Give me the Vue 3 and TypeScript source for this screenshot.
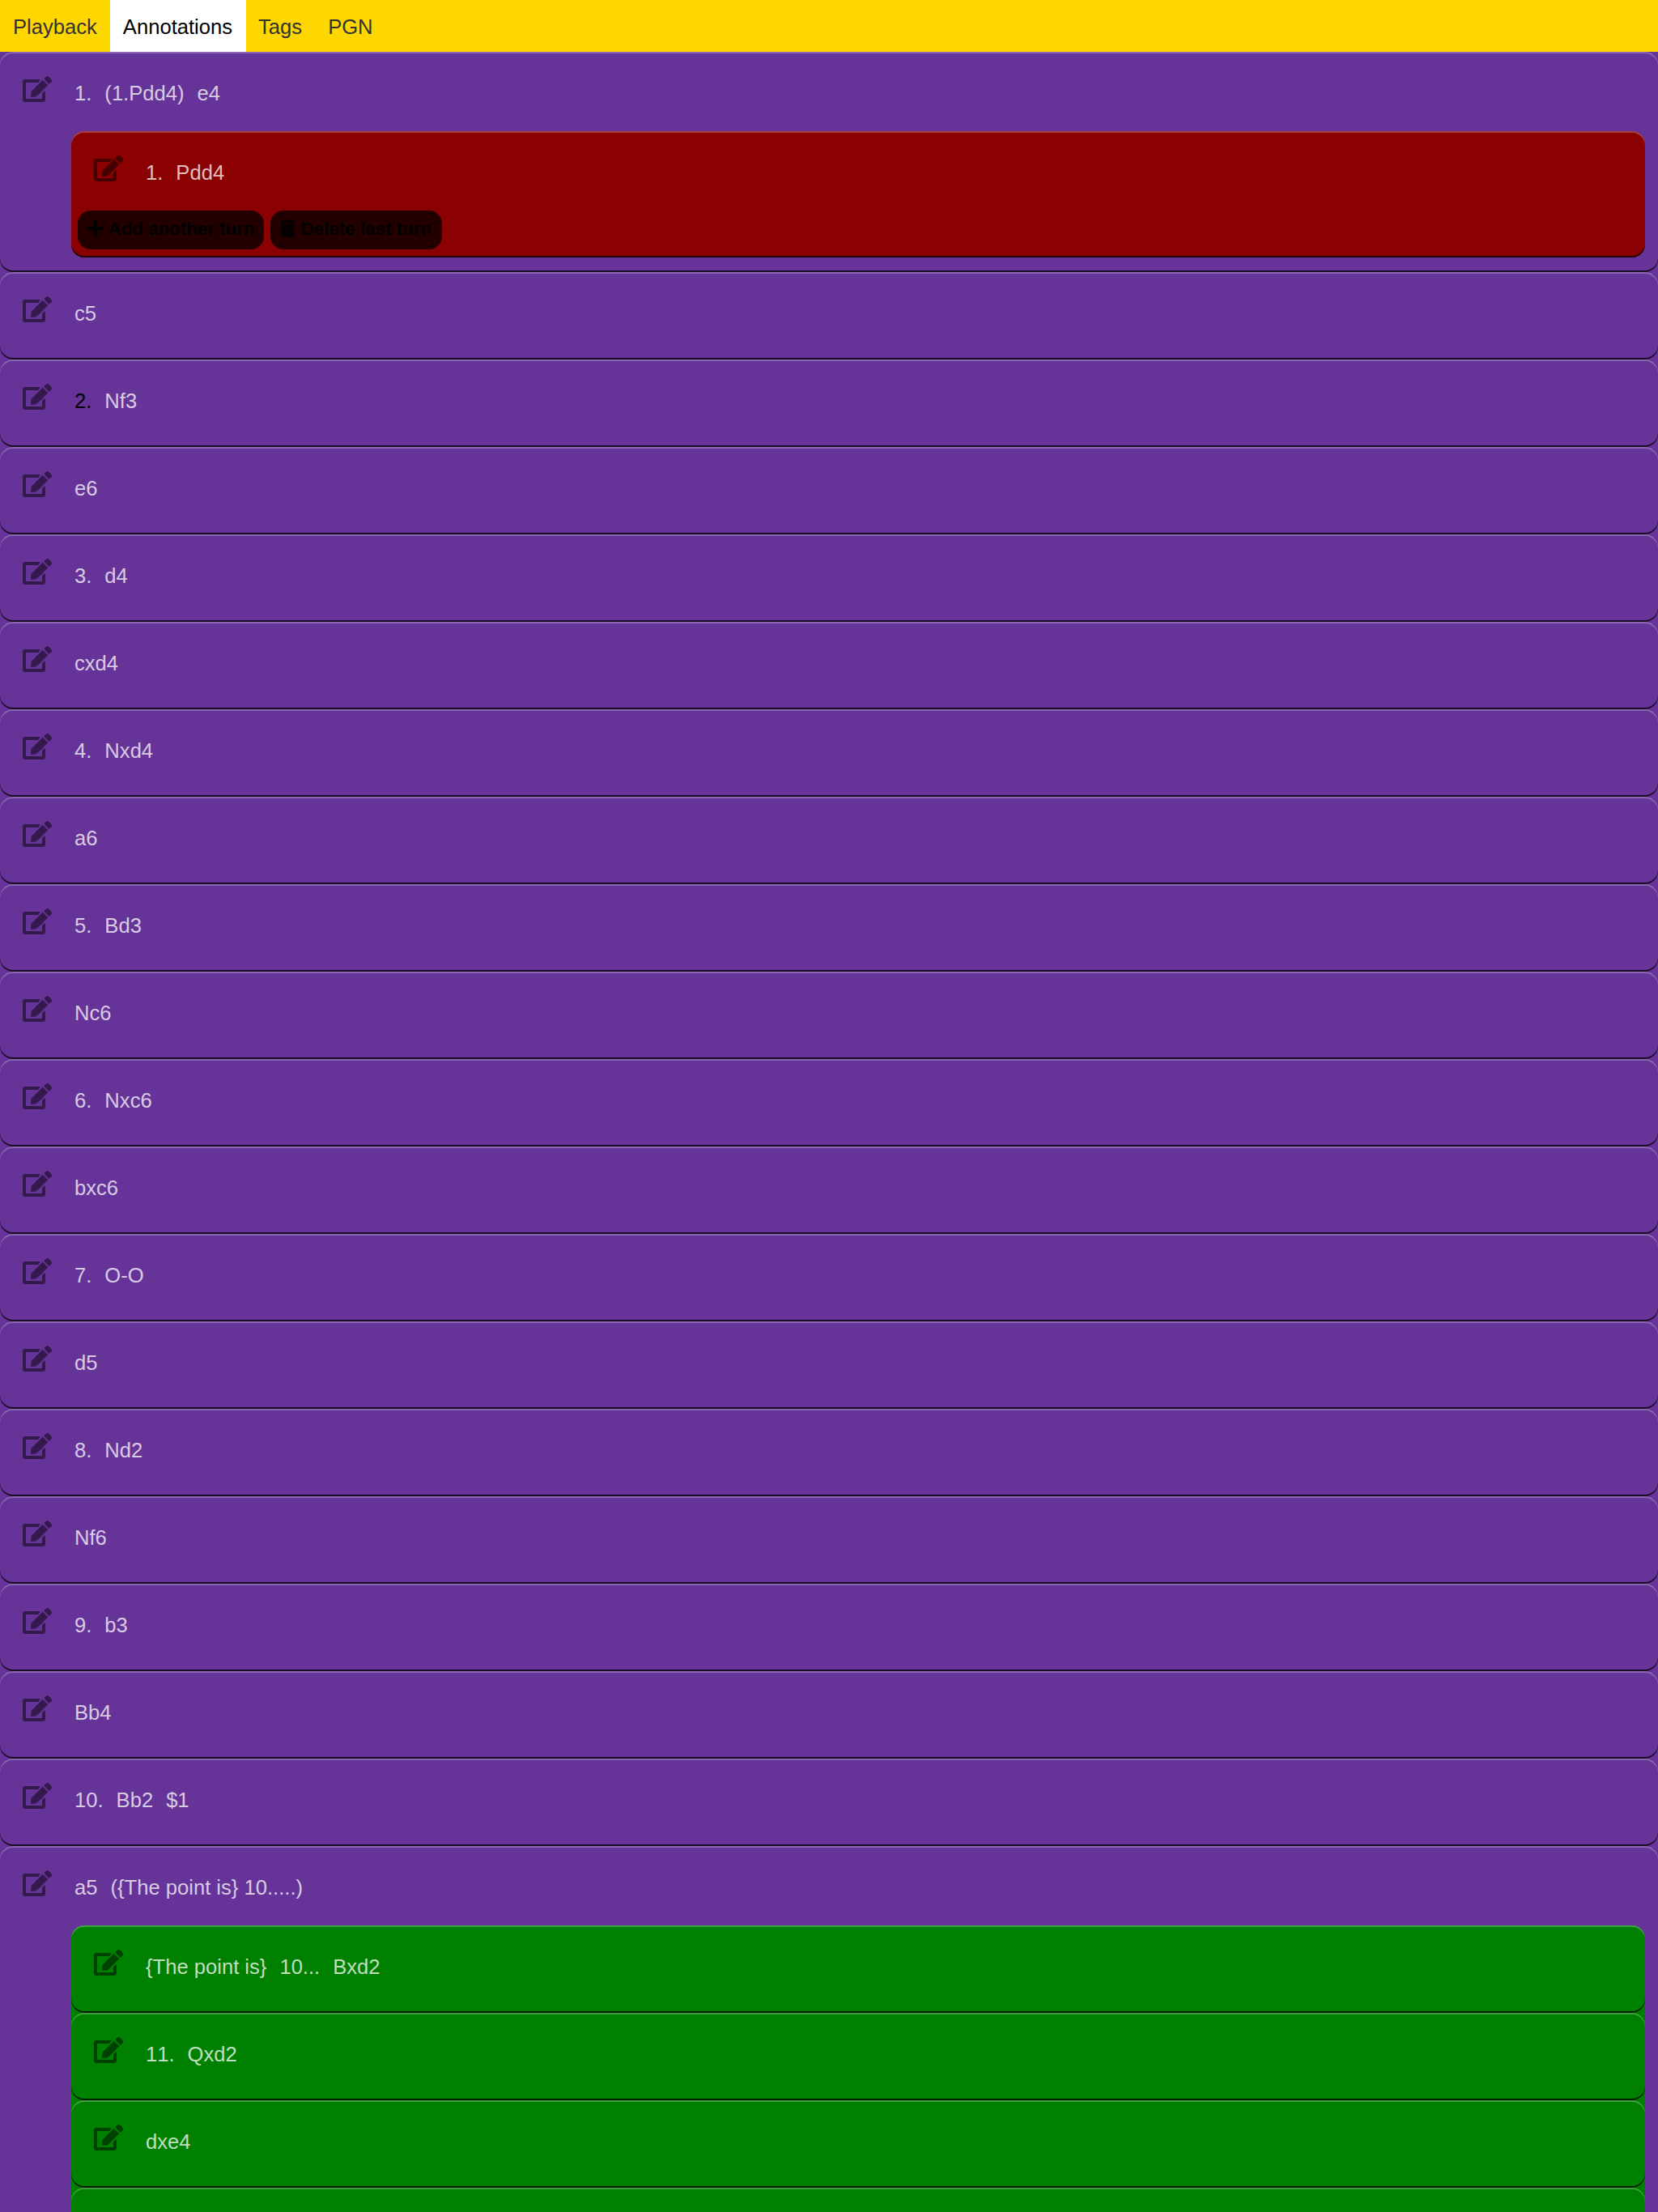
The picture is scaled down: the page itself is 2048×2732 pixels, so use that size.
<script setup lang="ts">
import { h } from 'vue'

interface Turn {
  parts: string[]
  current?: boolean
  variation?: { tone: string; turns: Turn[]; editable?: boolean }
}

const tabs = ['Playback', 'Annotations', 'Tags', 'PGN']
const activeTab = 'Annotations'

const turns: Turn[] = [
  { parts: ['1.', '(1.Pdd4)', 'e4'], variation: { tone: 'red', turns: [{ parts: ['1.', 'Pdd4'] }], editable: true } },
  { parts: ['c5'] },
  { parts: ['2.', 'Nf3'], current: true },
  { parts: ['e6'] },
  { parts: ['3.', 'd4'] },
  { parts: ['cxd4'] },
  { parts: ['4.', 'Nxd4'] },
  { parts: ['a6'] },
  { parts: ['5.', 'Bd3'] },
  { parts: ['Nc6'] },
  { parts: ['6.', 'Nxc6'] },
  { parts: ['bxc6'] },
  { parts: ['7.', 'O-O'] },
  { parts: ['d5'] },
  { parts: ['8.', 'Nd2'] },
  { parts: ['Nf6'] },
  { parts: ['9.', 'b3'] },
  { parts: ['Bb4'] },
  { parts: ['10.', 'Bb2', '$1'] },
  {
    parts: ['a5', '({The point is} 10.....)'],
    variation: {
      tone: 'green',
      turns: [
        { parts: ['{The point is}', '10...', 'Bxd2'] },
        { parts: ['11.', 'Qxd2'] },
        { parts: ['dxe4'] },
        { parts: [] },
      ],
    },
  },
]

const editPath =
  'M402.6 83.2l90.2 90.2c3.8 3.8 3.8 10 0 13.8L274.4 405.6l-92.8 10.3c-12.4 1.4-22.9-9.1-21.5-21.5l10.3-92.8L388.8 83.2c3.8-3.8 10-3.8 13.8 0zm162-22.9l-48.8-48.8c-15.2-15.2-39.9-15.2-55.2 0l-35.4 35.4c-3.8 3.8-3.8 10 0 13.8l90.2 90.2c3.8 3.8 10 3.8 13.8 0l35.4-35.4c15.2-15.3 15.2-40 0-55.2zM384 346.2V448H64V128h229.8c3.2 0 6.2-1.3 8.5-3.5l40-40c7.6-7.6 2.2-20.5-8.5-20.5H48C21.5 64 0 85.5 0 112v352c0 26.5 21.5 48 48 48h352c26.5 0 48-21.5 48-48V306.2c0-10.7-12.9-16-20.5-8.5l-40 40c-2.2 2.3-3.5 5.3-3.5 8.5z'

const TurnHead = (props: { turn: Turn }) =>
  h('div', { class: 'head' }, [
    h('button', { class: 'edit', 'aria-label': 'Edit' }, [
      h('svg', { viewBox: '0 0 576 512' }, [h('path', { d: editPath })]),
    ]),
    ...props.turn.parts.map((part, i) =>
      h('span', { class: ['part', { current: props.turn.current && i === 0 }] }, part),
    ),
  ])
TurnHead.props = ['turn']
</script>

<template>
  <div class="app">
    <nav class="tabs">
      <a v-for="tab in tabs" :key="tab" class="tab" :class="{ active: tab === activeTab }">{{ tab }}</a>
    </nav>
    <main class="turns">
      <section v-for="(turn, i) in turns" :key="i" class="turn">
        <TurnHead :turn="turn" />
        <div v-if="turn.variation" class="variation" :class="turn.variation.tone">
          <section v-for="(sub, j) in turn.variation.turns" :key="j" class="turn">
            <TurnHead :turn="sub" />
            <div v-if="turn.variation.editable" class="actions">
              <button class="action add">
                <svg viewBox="0 0 448 512"><path d="M416 208H272V64c0-17.67-14.33-32-32-32h-32c-17.67 0-32 14.33-32 32v144H32c-17.67 0-32 14.33-32 32v32c0 17.67 14.33 32 32 32h144v144c0 17.67 14.33 32 32 32h32c17.67 0 32-14.33 32-32V304h144c17.67 0 32-14.33 32-32v-32c0-17.67-14.33-32-32-32z" /></svg>
                <span>Add another turn</span>
              </button>
              <button class="action delete">
                <svg viewBox="0 0 448 512"><path d="M432 32H312l-9.4-18.7A24 24 0 0 0 281.1 0H166.8a23.72 23.72 0 0 0-21.4 13.3L136 32H16A16 16 0 0 0 0 48v32a16 16 0 0 0 16 16h416a16 16 0 0 0 16-16V48a16 16 0 0 0-16-16zM53.2 467a48 48 0 0 0 47.9 45h245.8a48 48 0 0 0 47.9-45L416 128H32z" /></svg>
                <span>Delete last turn</span>
              </button>
            </div>
          </section>
        </div>
      </section>
    </main>
  </div>
</template>

<style>
body {
  overflow: hidden;
  background: #663399;
}
</style>

<style scoped>
.app {
  height: 2732px;
  overflow: hidden;
  background: #663399;
  font: 25.6px/32px "Liberation Sans", Arial, sans-serif;
}
.tabs {
  display: flex;
  height: 64px;
  background: #ffd700;
}
.tab {
  padding: 17px 16px 0;
  color: #333;
}
.tab.active {
  box-sizing: border-box;
  width: 168px;
  margin-right: -0.8px;
  background: #fff;
  color: #000;
}
.turn {
  min-height: 108px;
  box-sizing: border-box;
  padding-bottom: 10px;
  border-radius: 16px;
  box-shadow: inset 0 2px 0 rgba(255, 255, 255, 0.25), inset 0 -2px 0 rgba(0, 0, 0, 0.75);
}
.turn:has(> .variation) {
  padding-bottom: 18px;
}
:deep(.head) {
  display: flex;
  align-items: flex-start;
  gap: 16px;
  height: 98px;
  box-sizing: border-box;
  padding: 30px 0 0 28px;
}
:deep(.edit) {
  margin: 0 12px 0 0;
  padding: 0;
  border: 0;
  background: none;
  line-height: 0;
}
:deep(.edit svg) {
  display: block;
  width: 36px;
  height: 32px;
  fill: rgba(0, 0, 0, 0.5);
}
:deep(.part) {
  padding-top: 5px;
  color: rgba(255, 255, 255, 0.75);
  font-kerning: none;
  white-space: nowrap;
}
:deep(.part.current) {
  color: #000;
}
.variation {
  margin: 0 16px 0 88px;
  border-radius: 16px;
}
.red {
  background: #8b0000;
}
.green {
  background: #008000;
}
.actions {
  display: flex;
  gap: 8px;
  padding-left: 8px;
}
.action {
  display: flex;
  align-items: center;
  gap: 6px;
  box-sizing: border-box;
  height: 48px;
  padding: 0 0 0 12px;
  border: 0;
  border-radius: 16px;
  background: rgba(0, 0, 0, 0.75);
  color: #000;
  font: bold 22.4px/25px "Liberation Sans", Arial, sans-serif;
  white-space: nowrap;
}
.action.add {
  width: 230px;
  letter-spacing: -0.03px;
}
.action.delete {
  width: 212px;
}
.action span {
  margin-top: -3px;
}
.action svg {
  flex: none;
  width: 19.6px;
  height: 22.4px;
  margin-top: -4px;
  fill: #000;
}
.action.delete svg {
  fill: #060000;
}
</style>
